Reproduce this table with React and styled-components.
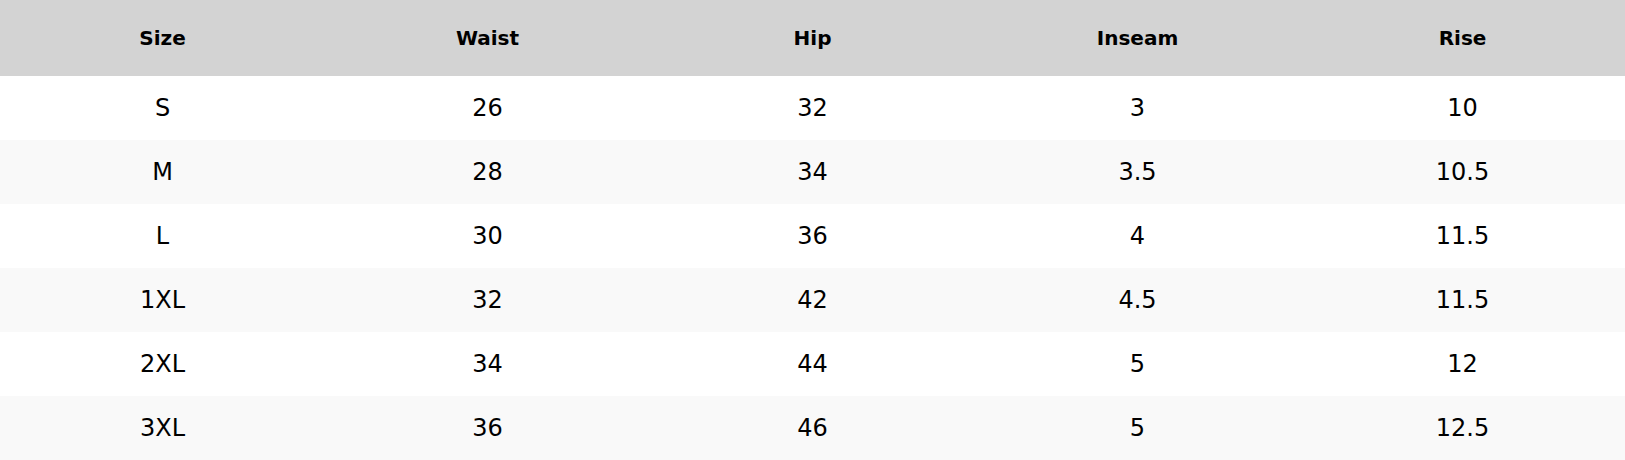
import React from "react";
import styled, { createGlobalStyle } from "styled-components";

const GlobalStyle = createGlobalStyle`
  html, body {
    margin: 0;
    padding: 0;
    background: #fff;
  }
`;

const Table = styled.table`
  width: 1625px;
  border-collapse: collapse;
  table-layout: fixed;
  font-family: "DejaVu Sans", Verdana, sans-serif;
  color: #000;
`;

const HeadRow = styled.tr`
  height: 76px;
  background: #d3d3d3;
`;

const HeadCell = styled.th`
  font-size: 20px;
  font-weight: bold;
  text-align: center;
  padding: 0;
`;

const Row = styled.tr`
  height: 64px;
  background: ${(props) => (props.$striped ? "#f9f9f9" : "#fff")};
`;

const Cell = styled.td`
  font-size: 24px;
  text-align: center;
  padding: 0;
`;

const columns = ["Size", "Waist", "Hip", "Inseam", "Rise"];

const rows = [
  ["S", "26", "32", "3", "10"],
  ["M", "28", "34", "3.5", "10.5"],
  ["L", "30", "36", "4", "11.5"],
  ["1XL", "32", "42", "4.5", "11.5"],
  ["2XL", "34", "44", "5", "12"],
  ["3XL", "36", "46", "5", "12.5"],
];

const App = () => {
  return (
    <>
      <GlobalStyle />
      <Table>
        <thead>
          <HeadRow>
            {columns.map((c) => (
              <HeadCell key={c}>{c}</HeadCell>
            ))}
          </HeadRow>
        </thead>
        <tbody>
          {rows.map((r, i) => (
            <Row key={r[0]} $striped={i % 2 === 1}>
              {r.map((v, j) => (
                <Cell key={j}>{v}</Cell>
              ))}
            </Row>
          ))}
        </tbody>
      </Table>
    </>
  );
};

export default App;
